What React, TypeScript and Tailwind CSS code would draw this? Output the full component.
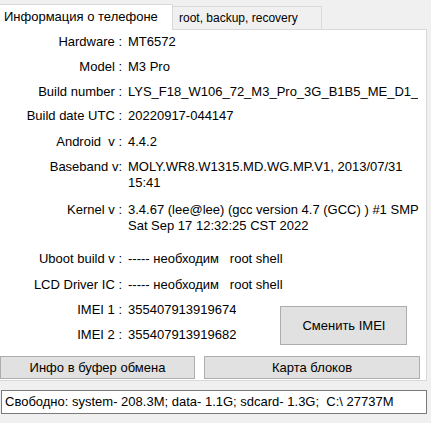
import React from "react";

const rows: { label: string; value: string[]; mt: string }[] = [
  { label: "Hardware :", value: ["MT6572"], mt: "mt-[4px]" },
  { label: "Model :", value: ["M3 Pro"], mt: "mt-[9px]" },
  { label: "Build number :", value: ["LYS_F18_W106_72_M3_Pro_3G_B1B5_ME_D1_"], mt: "mt-[9px]" },
  { label: "Build date UTC :", value: ["20220917-044147"], mt: "mt-[8px]" },
  { label: "Android  v :", value: ["4.4.2"], mt: "mt-[10px]" },
  { label: "Baseband v:", value: ["MOLY.WR8.W1315.MD.WG.MP.V1, 2013/07/31", "15:41"], mt: "mt-[9px]" },
  { label: "Kernel v :", value: ["3.4.67 (lee@lee) (gcc version 4.7 (GCC) ) #1 SMP", "Sat Sep 17 12:32:25 CST 2022"], mt: "mt-[11px]" },
  { label: "Uboot build v :", value: ["----- необходим   root shell"], mt: "mt-[17px]" },
  { label: "LCD Driver IC :", value: ["----- необходим   root shell"], mt: "mt-[10px]" },
];

function Row({ label, value, mt }: { label: string; value: string[]; mt?: string }) {
  return (
    <div className={`flex ${mt ?? ""}`}>
      <div className="w-[122px] shrink-0 text-right whitespace-pre">{label}</div>
      <div className="ml-[6px] min-w-0 overflow-hidden whitespace-pre">
        {value.map((v) => (
          <div key={v}>{v}</div>
        ))}
      </div>
    </div>
  );
}

export default function App() {
  return (
    <div className="w-[431px] h-[423px] overflow-hidden bg-[#f0f0f0] text-[13px] leading-[16px] text-black font-['Liberation_Sans',Arial,sans-serif]">
      {/* tabs */}
      <div className="flex h-[29px] items-end">
        <div className="h-[26px] w-[173px] bg-white border-t border-r border-[#d9d9d9] pl-[4px] pt-[4px] text-[13px] leading-[16px] relative z-10 -mb-px">
          Информация о телефоне
        </div>
        <div className="h-[23px] w-[149px] bg-[#f0f0f0] border-t border-r border-[#d9d9d9] pl-[6px] pt-[3px] text-[12px] leading-[16px]">
          root, backup, recovery
        </div>
        <div className="flex-1" />
      </div>

      {/* panel */}
      <div className="w-[427px] h-[352px] bg-white border-t border-r border-b border-[#d9d9d9] overflow-hidden">
        {rows.map((r) => (
          <Row key={r.label} {...r} />
        ))}
        <div className="flex mt-[9px]">
          <div>
            <Row label="IMEI 1 :" value={["355407913919674"]} />
            <Row label="IMEI 2 :" value={["355407913919682"]} mt="mt-[9px]" />
          </div>
          <button className="ml-[44px] mt-[4px] w-[127px] h-[39px] bg-[#e1e1e1] border border-[#adadad] text-[13px]">
            Сменить IMEI
          </button>
        </div>
        <div className="flex mt-[11px]">
          <button className="w-[195px] h-[23px] bg-[#e1e1e1] border border-[#adadad] text-[13px]">
            Инфо в буфер обмена
          </button>
          <button className="ml-[9px] w-[216px] h-[23px] bg-[#e1e1e1] border border-[#adadad] text-[13px]">
            Карта блоков
          </button>
        </div>
      </div>

      {/* status */}
      <div className="mt-[9px] ml-[1px] w-[426px] h-[24px] bg-white border border-[#7a7a7a] pl-[3px] pt-[3px] whitespace-pre">
        Свободно: system- 208.3M; data- 1.1G; sdcard- 1.3G;  C:\ 27737M
      </div>
    </div>
  );
}
